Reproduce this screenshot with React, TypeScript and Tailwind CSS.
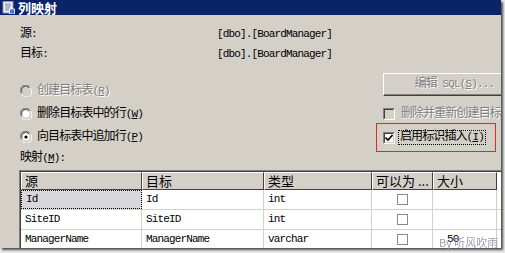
const mono = "font-['Liberation_Mono','Noto_Sans_CJK_SC',monospace]"

function C({ children }: { children: React.ReactNode }) {
  return <span className="text-[12px] tracking-[-0.9px]">{children}</span>
}

function Radio({ checked, disabled }: { checked?: boolean; disabled?: boolean }) {
  return (
    <svg width="12" height="12" viewBox="0 0 12 12" className="shrink-0">
      <path d="M10 2.2A5 5 0 0 0 1.2 8.5" fill="none" stroke="#808080" strokeWidth="1" />
      <path d="M9 2.8A4 4 0 0 0 2.3 7.6" fill="none" stroke="#404040" strokeWidth="1" />
      <path d="M2 10A5 5 0 0 0 10.8 3.5" fill="none" stroke="#ffffff" strokeWidth="1" />
      <circle cx="6" cy="6" r="3.6" fill={disabled ? "#d4d0c8" : "#ffffff"} />
      {checked && <circle cx="6" cy="6" r="1.6" fill="#000000" />}
    </svg>
  )
}

function Check({ checked, disabled }: { checked?: boolean; disabled?: boolean }) {
  return (
    <div className="w-[12px] h-[12px] shrink-0 border-t border-l border-t-[#808080] border-l-[#808080] border-b border-r border-b-white border-r-white flex">
      <div
        className={`flex-1 border-t border-l border-t-[#404040] border-l-[#404040] border-b border-r border-b-[#d4d0c8] border-r-[#d4d0c8] ${disabled ? "bg-[#d4d0c8]" : "bg-white"} flex items-center justify-center`}
      >
        {checked && (
          <svg width="8" height="8" viewBox="0 0 8 8">
            <path d="M0.5 3.5 L3 6 L7.5 1" fill="none" stroke="#000" strokeWidth="1.6" />
          </svg>
        )}
      </div>
    </div>
  )
}

function GridCheck() {
  return <div className="w-[11px] h-[11px] border border-[#888] bg-white" />
}

const rows = [
  ["Id", "Id", "int", "", true],
  ["SiteID", "SiteID", "int", "", false],
  ["ManagerName", "ManagerName", "varchar", "50", false],
] as const

export default function App() {
  return (
    <div className="w-[505px] h-[253px] relative overflow-hidden bg-[#e8e8e8]">
      <div className="w-[501px] h-[248px] bg-[#d4d0c8] overflow-hidden flex flex-col shadow-[2px_2px_2px_rgba(0,0,0,0.65)]">
        {/* title bar */}
        <div className="h-[15px] bg-[#0a246a] flex items-center gap-[3px] pl-[2px] shrink-0">
          <svg width="13" height="13" viewBox="0 0 13 13" className="shrink-0">
            <rect x="1" y="0.5" width="10" height="11.5" fill="#f4f6fa" stroke="#7f8ba8" />
            <path d="M3 3h6M3 5h6M3 7h5M3 9h4" stroke="#6b7a9c" strokeWidth="1" />
            <rect x="7.5" y="8" width="5" height="5" fill="#3a78d8" stroke="#ffffff" strokeWidth="0.8" />
          </svg>
          <span className="text-white font-bold text-[13px] leading-[15px] font-['Noto_Sans_CJK_SC',sans-serif]">列映射</span>
        </div>

        <div className={`${mono} text-[11px] tracking-[-0.85px] text-black pl-[20px] flex flex-col`}>
          <div className="flex h-[14px] items-center mt-[12px] leading-[14px]">
            <span className="w-[197px]"><C>源</C>:</span>
            <span>[dbo].[BoardManager]</span>
          </div>
          <div className="flex h-[14px] items-center mt-[6px] leading-[14px]">
            <span className="w-[197px]"><C>目标</C>:</span>
            <span>[dbo].[BoardManager]</span>
          </div>

          <div className="flex mt-[12px]">
            <div className="w-[356px] flex flex-col">
              <div className="flex items-center gap-[5px] h-[16px] mt-[10px] text-[#808080] [text-shadow:1px_1px_0_#fff]">
                <Radio disabled />
                <span><C>创建目标表</C>(<u>R</u>)</span>
              </div>
              <div className="flex items-center gap-[5px] h-[16px] mt-[7px]">
                <Radio />
                <span><C>删除目标表中的行</C>(<u>W</u>)</span>
              </div>
              <div className="flex items-center gap-[5px] h-[16px] mt-[7px]">
                <Radio checked />
                <span><C>向目标表中追加行</C>(<u>P</u>)</span>
              </div>
            </div>
            <div className="w-[125px] flex flex-col">
              <div className="ml-[7px] w-[144px] h-[23px] shrink-0 border-t border-l border-t-white border-l-white border-b border-r border-b-[#404040] border-r-[#404040]">
                <div className="h-full border-b border-r border-b-[#808080] border-r-[#808080] flex items-center justify-center text-[#808080] [text-shadow:1px_1px_0_#fff] whitespace-nowrap">
                  <C>编辑</C>&nbsp;SQL(<u>S</u>)...
                </div>
              </div>
              <div className="ml-[7px] mt-[12px] flex items-center gap-[6px] h-[12px] whitespace-nowrap text-[#808080] [text-shadow:1px_1px_0_#fff]">
                <Check disabled />
                <C>删除并重新创建目标表</C>
              </div>
              <div className="mt-[3px] w-[120px] h-[29px] border-[1.5px] border-[#e02828] flex items-center pl-[6px] gap-[3px]">
                <Check checked />
                <span className="border border-dotted border-black px-[1px] leading-[13px] whitespace-nowrap">
                  <C>启用标识插入</C>(<u>I</u>)
                </span>
              </div>
            </div>
          </div>

          <div className="h-[14px] leading-[14px] -mt-[1px]"><C>映射</C>(<u>M</u>):</div>

          {/* grid */}
          <div className="mt-[5px] -ml-[1px] border-t border-l border-t-[#808080] border-l-[#808080]">
            <div className="border-t border-l border-t-[#404040] border-l-[#404040] bg-white">
              <div className="grid grid-cols-[121px_122px_108px_61px_64px] font-['Noto_Sans_CJK_SC',sans-serif] text-[13px] tracking-normal h-[18px]">
                {["源", "目标", "类型", "可以为 ...", "大小"].map((h) => (
                  <div
                    key={h}
                    className="bg-[#d4d0c8] border-t border-l border-t-white border-l-white border-b border-r border-b-[#404040] border-r-[#404040] pl-[3px] leading-[15px] whitespace-nowrap overflow-hidden"
                  >
                    {h}
                  </div>
                ))}
              </div>
              {rows.map(([a, b, c, d, sel]) => (
                <div key={a} className="grid grid-cols-[121px_122px_108px_61px_64px] h-[20px] border-b border-[#d4d0c8]">
                  <div className={`pl-[4px] flex items-center border-r border-[#d4d0c8] ${sel ? "bg-[#d8d7dc] border border-dotted border-black" : ""}`}>{a}</div>
                  <div className="pl-[4px] flex items-center border-r border-[#d4d0c8]">{b}</div>
                  <div className="pl-[4px] flex items-center border-r border-[#d4d0c8]">{c}</div>
                  <div className="flex items-center justify-center border-r border-[#d4d0c8]">
                    <GridCheck />
                  </div>
                  <div className="pl-[14px] flex items-center border-r border-[#d4d0c8]">{d}</div>
                </div>
              ))}
            </div>
          </div>
        </div>
      </div>

      <div className="absolute left-[439px] top-[235px] text-[11px] leading-[15px] text-[#8e94a8] opacity-90 font-['Noto_Sans_CJK_SC',sans-serif] whitespace-nowrap">
        By 听风吹雨
      </div>
    </div>
  )
}
